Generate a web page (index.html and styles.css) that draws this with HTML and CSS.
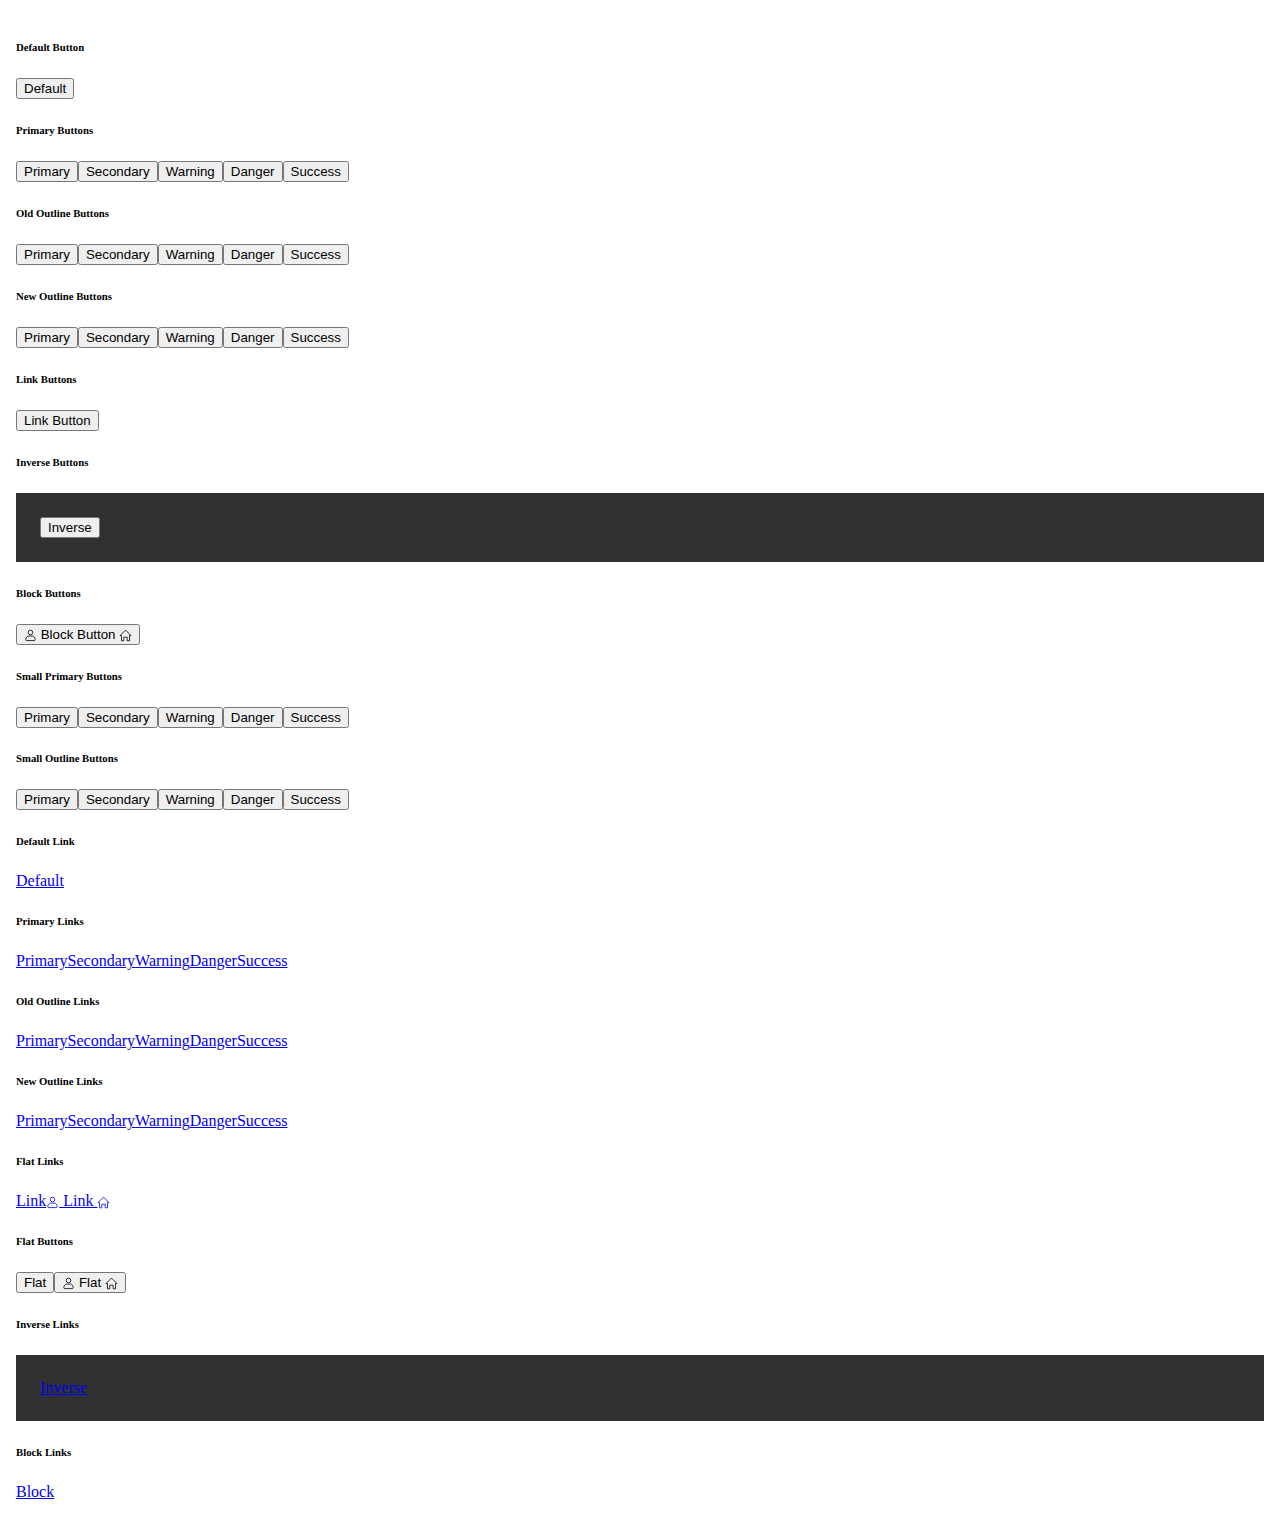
FILE: index.html
```html
<!DOCTYPE html>
<html lang="en">
<head>
<meta charset="utf-8">
<title>Buttons</title>
<link rel="stylesheet" href="styles.css">
</head>
<body>
<svg class="sprite" aria-hidden="true">
  <symbol id="user" viewBox="0 0 13 13">
    <circle cx="6.5" cy="3.5" r="2.3"/>
    <path d="M4.7 7.1h3.6c1.6 0 2.9 1.5 2.9 3.4 0 .7-.4 1.1-1.2 1.1H3c-.8 0-1.2-.4-1.2-1.1 0-1.9 1.3-3.4 2.9-3.4z"/>
  </symbol>
  <symbol id="home" viewBox="0 0 13 13">
    <path d="M2.5 6.6H1L6.5 1.1l5.5 5.5h-1.5v5.2H8.2V8.2H4.8v3.6H2.5z"/>
  </symbol>
</svg>
<main>
  <h6>Default Button</h6>
  <div class="row"><button type="button">Default</button></div>
  <h6>Primary Buttons</h6>
  <div class="row"><button type="button">Primary</button><button type="button">Secondary</button><button type="button">Warning</button><button type="button">Danger</button><button type="button">Success</button></div>
  <h6>Old Outline Buttons</h6>
  <div class="row"><button type="button">Primary</button><button type="button">Secondary</button><button type="button">Warning</button><button type="button">Danger</button><button type="button">Success</button></div>
  <h6>New Outline Buttons</h6>
  <div class="row"><button type="button">Primary</button><button type="button">Secondary</button><button type="button">Warning</button><button type="button">Danger</button><button type="button">Success</button></div>
  <h6>Link Buttons</h6>
  <div class="row"><button type="button">Link Button</button></div>
  <h6>Inverse Buttons</h6>
  <div class="inverse"><button type="button">Inverse</button></div>
  <h6>Block Buttons</h6>
  <div class="row"><button type="button"><svg class="icon"><use href="#user"/></svg> Block Button <svg class="icon"><use href="#home"/></svg></button></div>
  <h6>Small Primary Buttons</h6>
  <div class="row"><button type="button">Primary</button><button type="button">Secondary</button><button type="button">Warning</button><button type="button">Danger</button><button type="button">Success</button></div>
  <h6>Small Outline Buttons</h6>
  <div class="row"><button type="button">Primary</button><button type="button">Secondary</button><button type="button">Warning</button><button type="button">Danger</button><button type="button">Success</button></div>
  <h6>Default Link</h6>
  <div class="row"><a href="#">Default</a></div>
  <h6>Primary Links</h6>
  <div class="row"><a href="#">Primary</a><a href="#">Secondary</a><a href="#">Warning</a><a href="#">Danger</a><a href="#">Success</a></div>
  <h6>Old Outline Links</h6>
  <div class="row"><a href="#">Primary</a><a href="#">Secondary</a><a href="#">Warning</a><a href="#">Danger</a><a href="#">Success</a></div>
  <h6>New Outline Links</h6>
  <div class="row"><a href="#">Primary</a><a href="#">Secondary</a><a href="#">Warning</a><a href="#">Danger</a><a href="#">Success</a></div>
  <h6>Flat Links</h6>
  <div class="row"><a href="#">Link</a><a href="#"><svg class="icon"><use href="#user"/></svg> Link <svg class="icon"><use href="#home"/></svg></a></div>
  <h6>Flat Buttons</h6>
  <div class="row"><button type="button">Flat</button><button type="button"><svg class="icon"><use href="#user"/></svg> Flat <svg class="icon"><use href="#home"/></svg></button></div>
  <h6>Inverse Links</h6>
  <div class="inverse"><a href="#">Inverse</a></div>
  <h6>Block Links</h6>
  <div class="row"><a href="#">Block</a></div>
</main>
</body>
</html>
```

FILE: styles.css
```css
body {
  margin: 0;
  padding: 16px;
  background: #fff;
  color: #000;
  font-family: "Liberation Serif", "Times New Roman", serif;
}

button {
  font-family: "Liberation Sans", Arial, sans-serif;
}

a {
  color: #0000ee;
}

.inverse {
  padding: 24px;
  background: #313131;
}

.sprite {
  display: none;
}

.icon {
  width: 13px;
  height: 13px;
  vertical-align: -3px;
  fill: none;
  stroke: currentColor;
  stroke-width: 0.8;
  stroke-linejoin: round;
}
```
